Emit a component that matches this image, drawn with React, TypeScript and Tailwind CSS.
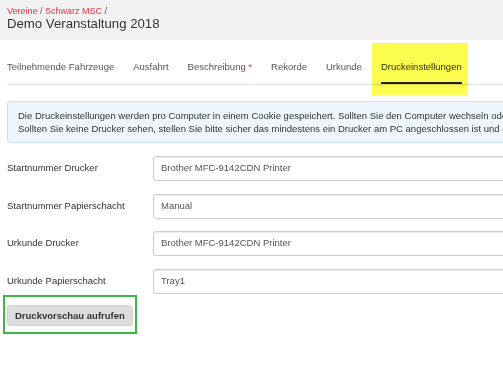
import React from "react";

const tabs = ["Teilnehmende Fahrzeuge", "Ausfahrt", "Beschreibung", "Rekorde", "Urkunde", "Druckeinstellungen"];

const rows = [
  { label: "Startnummer Drucker", value: "Brother MFC-9142CDN Printer" },
  { label: "Startnummer Papierschacht", value: "Manual" },
  { label: "Urkunde Drucker", value: "Brother MFC-9142CDN Printer" },
  { label: "Urkunde Papierschacht", value: "Tray1" },
];

export default function App() {
  return (
    <div className="w-[503px] h-[377px] overflow-hidden bg-white font-['Liberation_Sans',Arial,sans-serif] relative">
      <div className="w-[900px]">
        {/* header */}
        <div className="h-[40px] bg-[#f2f2f2] pl-[7px] pt-[5px]">
          <div className="text-[9px] leading-[12px] text-[#555] whitespace-nowrap">
            <span className="text-[#e8343c]">Vereine</span> / <span className="text-[#e8343c]">Schwarz MSC</span> /
          </div>
          <div className="text-[13.2px] leading-[13px] text-[#333] whitespace-nowrap">Demo Veranstaltung 2018</div>
        </div>

        {/* tabs */}
        <div className="flex ml-[7px] gap-[19px] border-b border-[#dddddd] text-[9.5px] leading-[12px] text-[#555]">
          {tabs.map((t) => {
            const active = t === "Druckeinstellungen";
            return (
              <div
                key={t}
                className={
                  active
                    ? "relative h-[44px] pt-[21px] whitespace-nowrap border-b-2 border-[#222] text-[#333]"
                    : "relative h-[44px] pt-[21px] whitespace-nowrap"
                }
              >
                {t}
                {t === "Beschreibung" && <span className="text-[#e8343c]"> *</span>}
                {active && (
                  <div className="absolute left-[-9px] right-[-6px] top-[3px] h-[52px] bg-[#fbfb50] mix-blend-multiply z-10" />
                )}
              </div>
            );
          })}
        </div>

        {/* info */}
        <div className="mt-[16px] ml-[7px] border border-[#c3e1f2] bg-[#eef6fb] rounded-[3px] pl-[10px] py-[7px] text-[9.5px] leading-[13px] text-[#333] whitespace-nowrap">
          Die Druckeinstellungen werden pro Computer in einem Cookie gespeichert. Sollten Sie den Computer wechseln oder den Browser wechseln, müssen Sie die Einstellungen erneut vornehmen.
          <br />
          Sollten Sie keine Drucker sehen, stellen Sie bitte sicher das mindestens ein Drucker am PC angeschlossen ist und das Druckprogramm läuft.
        </div>

        {/* form */}
        <div className="mt-[13px] flex flex-col gap-[12.5px]">
          {rows.map((r) => (
            <div key={r.label} className="flex items-center h-[25px] text-[9.5px] text-[#333]">
              <div className="w-[153px] shrink-0 pl-[7px] whitespace-nowrap">{r.label}</div>
              <div className="w-[600px] h-[25px] border border-[#cccccc] rounded-[3px] shadow-[inset_0_1px_1px_rgba(0,0,0,0.075)] pl-[7px] flex items-center text-[#555] bg-white">
                {r.value}
              </div>
            </div>
          ))}
        </div>

        {/* button */}
        <div className="mt-[1.5px] ml-[3px] w-[134px] border-2 border-[#3cb54a] pt-[8px] pb-[6px] pl-[2px]">
          <button className="block h-[21px] leading-[19px] px-[7px] bg-[#dddddd] border border-[#d4d4d4] rounded-[3px] text-[9.5px] font-bold text-[#333] whitespace-nowrap font-['Liberation_Sans',Arial,sans-serif]">
            Druckvorschau aufrufen
          </button>
        </div>
      </div>
    </div>
  );
}
